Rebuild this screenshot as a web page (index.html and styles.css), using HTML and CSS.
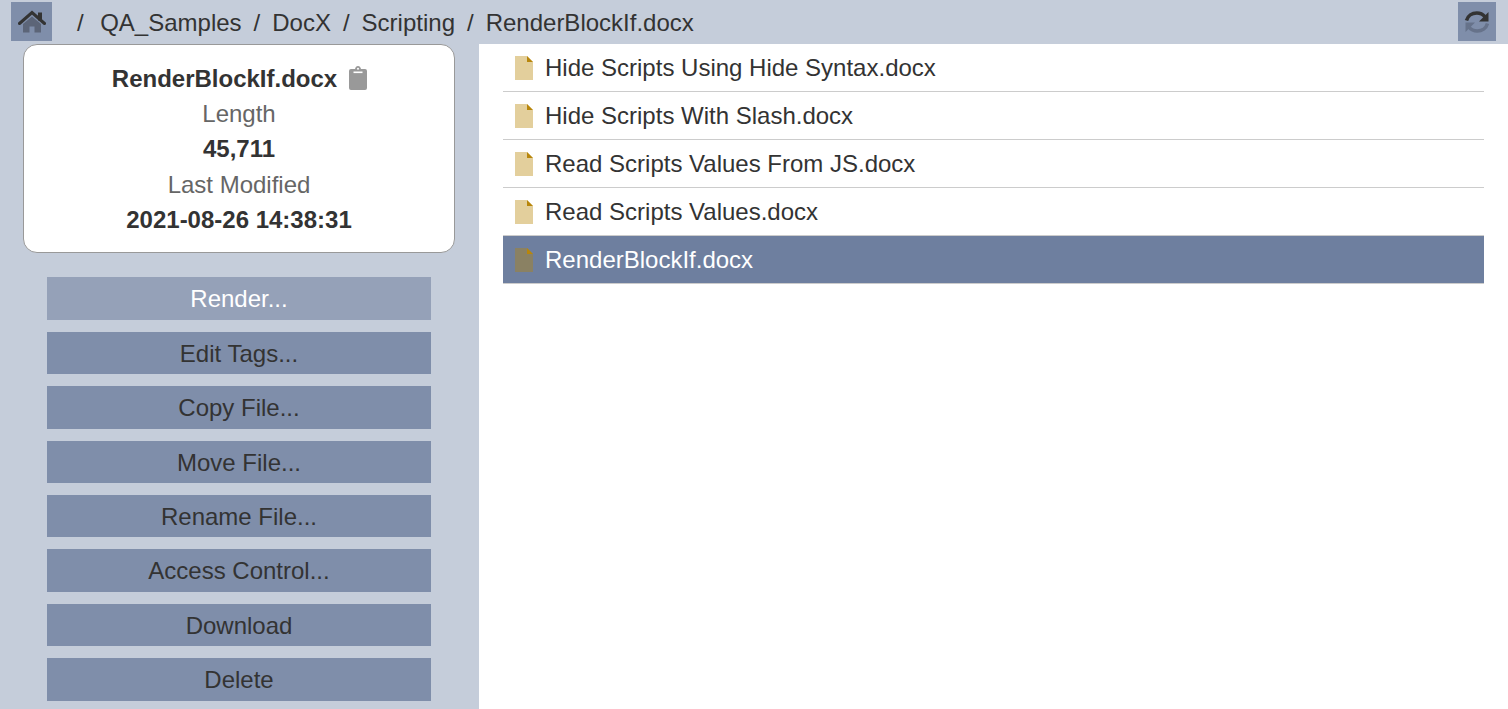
FILE: index.html
```
<!DOCTYPE html>
<html lang="en">
<head>
<meta charset="utf-8">
<title>RenderBlockIf.docx</title>
<link rel="stylesheet" href="styles.css">
</head>
<body>
<header class="topbar">
  <button class="icon-btn home-btn" aria-label="Home">
    <svg width="28" height="24" viewBox="0 0 28 24"><path class="house" d="M5 14 14 6.500 23 14V22.500h-6.500v-6h-5v6H5z"/><path class="chimney" d="M20 2.500h4v8h-4z"/><path class="roof" d="M1.500 13.500 14 2.500l12.500 11" /></svg>
  </button>
  <nav class="crumbs">
    <span class="root-sep">/</span><span>QA_Samples</span><span>/</span><span>DocX</span><span>/</span><span>Scripting</span><span>/</span><span>RenderBlockIf.docx</span>
  </nav>
  <button class="icon-btn refresh-btn" aria-label="Refresh">
    <svg width="26" height="26" viewBox="0 0 26 26"><path class="arc-bottom" d="M23.500 14.500c-1.300 4.700-5.500 7.500-10.300 7.500-3.300 0-6.300-1.500-8.200-3.800"/><path class="head-bottom" d="M1.500 23v-9.500H11z"/><path class="arc-top" d="M2.500 11.500C3.800 6.800 8 4 12.800 4c3.300 0 6.300 1.500 8.200 3.800"/><path class="head-top" d="M24.500 3v9.500H15z"/></svg>
  </button>
</header>
<div class="layout">
  <aside class="sidebar">
    <section class="card">
      <div class="card-title"><strong>RenderBlockIf.docx</strong>
        <svg class="clip" width="18" height="24" viewBox="0 0 18 24"><path d="M2 3h4C6.400 1.200 7.500 0 9 0s2.600 1.200 3 3h4a2 2 0 0 1 2 2v17a2 2 0 0 1-2 2H2a2 2 0 0 1-2-2V5a2 2 0 0 1 2-2z"/><rect class="clip-bar" x="4.500" y="5.500" width="9" height="1.600"/><circle class="clip-bar" cx="9" cy="2.800" r="1"/></svg>
      </div>
      <div class="label">Length</div>
      <div class="value">45,711</div>
      <div class="label">Last Modified</div>
      <div class="value">2021-08-26 14:38:31</div>
    </section>
    <div class="actions">
      <button class="action hover">Render...</button>
      <button class="action">Edit Tags...</button>
      <button class="action">Copy File...</button>
      <button class="action">Move File...</button>
      <button class="action">Rename File...</button>
      <button class="action">Access Control...</button>
      <button class="action">Download</button>
      <button class="action">Delete</button>
    </div>
  </aside>
  <main class="files">
    <div class="file"><svg class="doc" width="18" height="24" viewBox="0 0 18 24"><path class="sheet" d="M0 0h12l6 6v18H0z"/><path class="fold" d="M12 0l6 6h-6z"/></svg>Hide Scripts Using Hide Syntax.docx</div>
    <div class="file"><svg class="doc" width="18" height="24" viewBox="0 0 18 24"><path class="sheet" d="M0 0h12l6 6v18H0z"/><path class="fold" d="M12 0l6 6h-6z"/></svg>Hide Scripts With Slash.docx</div>
    <div class="file"><svg class="doc" width="18" height="24" viewBox="0 0 18 24"><path class="sheet" d="M0 0h12l6 6v18H0z"/><path class="fold" d="M12 0l6 6h-6z"/></svg>Read Scripts Values From JS.docx</div>
    <div class="file"><svg class="doc" width="18" height="24" viewBox="0 0 18 24"><path class="sheet" d="M0 0h12l6 6v18H0z"/><path class="fold" d="M12 0l6 6h-6z"/></svg>Read Scripts Values.docx</div>
    <div class="file selected"><svg class="doc" width="18" height="24" viewBox="0 0 18 24"><path class="sheet" d="M0 0h12l6 6v18H0z"/><path class="fold" d="M12 0l6 6h-6z"/></svg>RenderBlockIf.docx</div>
  </main>
</div>
</body>
</html>
```
FILE: styles.css
```
* { box-sizing: border-box; }
html, body { margin: 0; height: 100%; overflow: hidden; }
body {
  background: #c5cdda;
  color: #333;
  font-family: "Liberation Sans", Arial, sans-serif;
  font-size: 24px;
}
button { font: inherit; border: 0; padding: 0; }
.topbar {
  height: 44px;
  display: flex;
  align-items: flex-start;
  padding: 2px 12px 0 11px;
}
.icon-btn {
  height: 39px;
  background: #7f8eaa;
  display: flex;
  align-items: center;
  justify-content: center;
  flex: none;
}
.home-btn { width: 41px; }
.refresh-btn { width: 38px; }
.roof { fill: none; stroke: #333; stroke-width: 3; stroke-linecap: round; }
.chimney { fill: #333; }
.house { fill: #5c6578; }
.arc-top { fill: none; stroke: #333; stroke-width: 3.500; }
.head-top { fill: #333; }
.arc-bottom { fill: none; stroke: #66728a; stroke-width: 3.500; }
.head-bottom { fill: #66728a; }
.crumbs {
  flex: 1;
  display: flex;
  gap: 12px;
  margin-left: 25px;
  height: 39px;
  line-height: 42px;
}
.root-sep { margin-right: 4.500px; }
.layout { display: flex; height: 665px; }
.sidebar { width: 479px; flex: none; padding: 0 24px 0 23px; }
.card {
  height: 209px;
  background: #fff;
  border: 1px solid #999;
  border-radius: 14px;
  padding: 15.800px 0 0;
  text-align: center;
  line-height: 35.330px;
}
.card-title { display: flex; justify-content: center; align-items: center; gap: 12px; padding-left: 1px; }
.clip { fill: #999; flex: none; }
.clip-bar { fill: #fff; }
.label { color: #666; }
.value { font-weight: 700; }
.actions {
  display: flex;
  flex-direction: column;
  gap: 12px;
  padding: 24.400px 24px 0;
}
.action {
  height: 42.400px;
  padding-top: 1.500px;
  background: #7f8eaa;
  color: #333;
  text-align: center;
}
.action.hover { background: #95a1b8; color: #fff; }
.files {
  flex: 1;
  background: #fff;
  padding: 0 24px;
}
.file {
  height: 48px;
  display: flex;
  align-items: center;
  gap: 12px;
  padding-left: 12px;
  border-bottom: 1px solid #ccc;
}
.file.selected { background: #6e7f9f; color: #fff; }
.doc { flex: none; }
.sheet { fill: #e3cf9c; }
.fold { fill: #b8860b; }
.selected .sheet { fill: #8a8163; }
```
